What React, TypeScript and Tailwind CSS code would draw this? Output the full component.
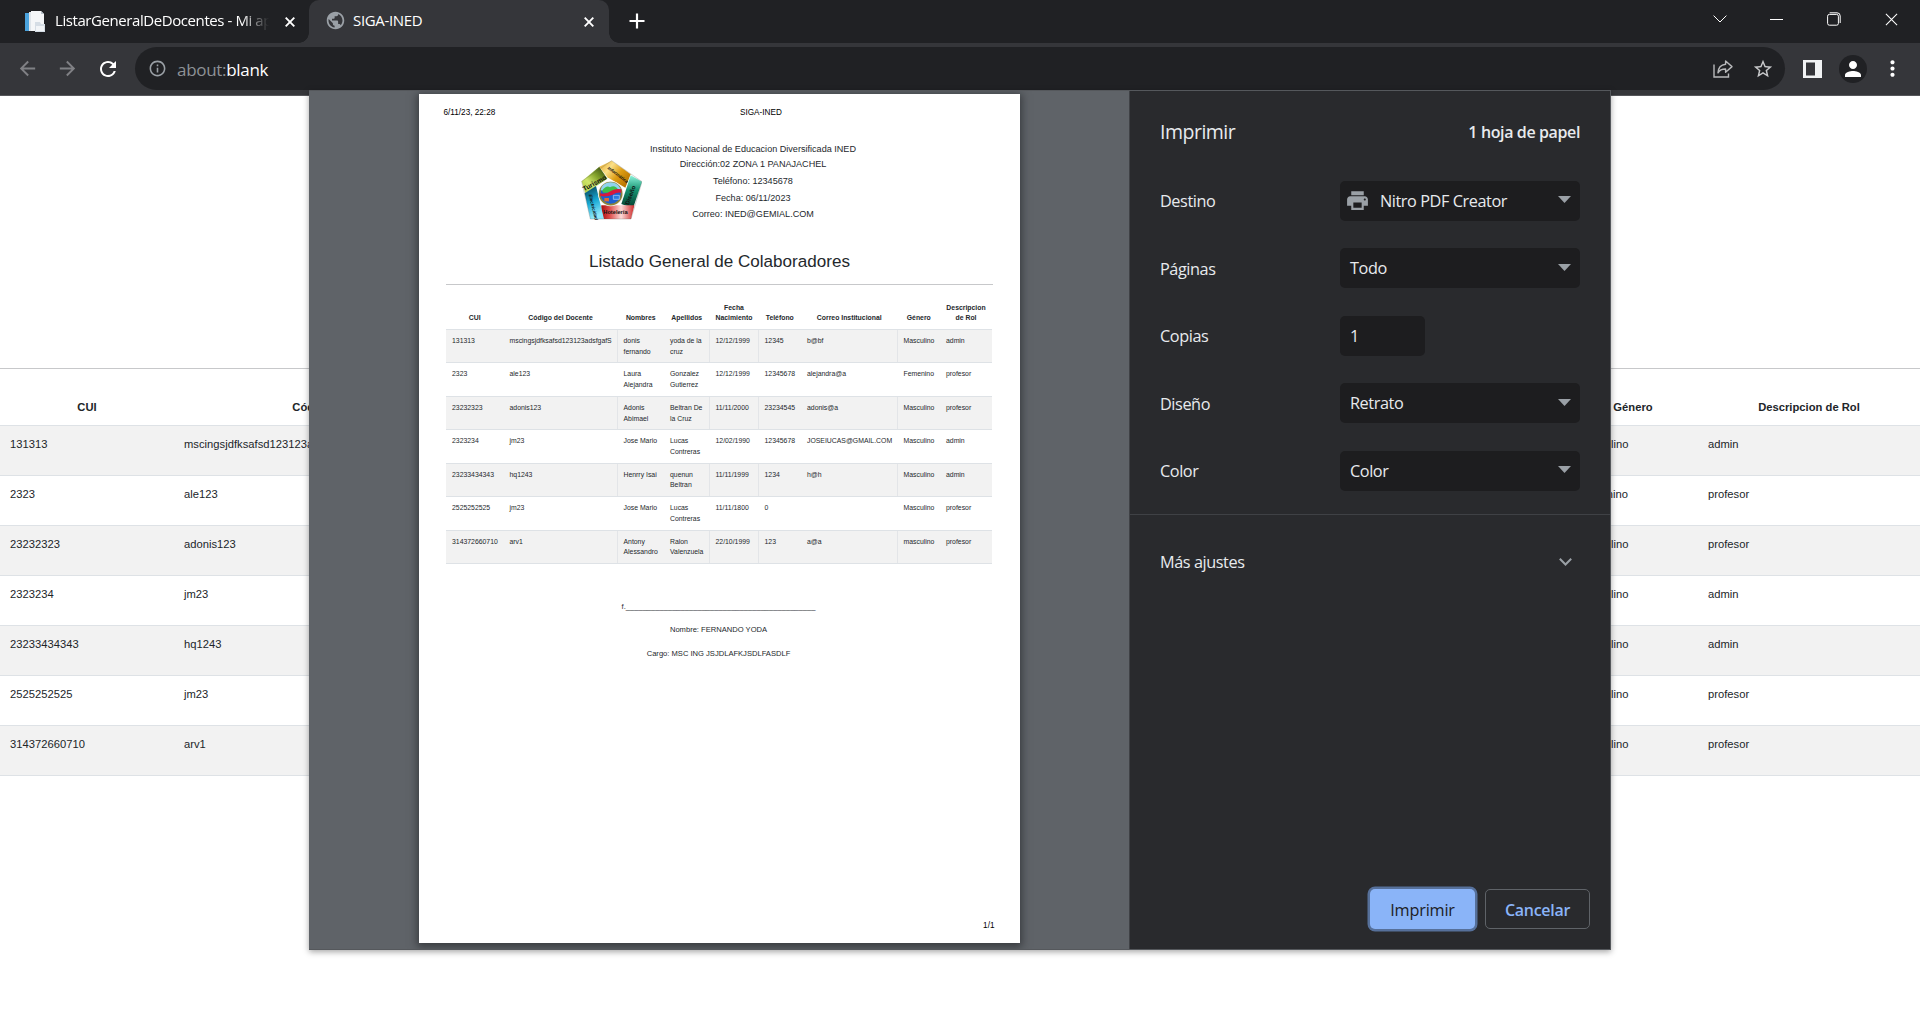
import React from "react";
import {
  MdArrowBack,
  MdArrowForward,
  MdInfoOutline,
  MdMoreVert,
  MdPerson,
  MdPrint,
  MdPublic,
  MdRefresh,
  MdStarBorder,
} from "react-icons/md";

type Row = string[];

const rows: Row[] = [
  ["131313", "mscingsjdfksafsd123123adsfgafS", "donis fernando", "yoda de la cruz", "12/12/1999", "12345", "b@bf", "Masculino", "admin"],
  ["2323", "ale123", "Laura Alejandra", "Gonzalez Gutierrez", "12/12/1999", "12345678", "alejandra@a", "Femenino", "profesor"],
  ["23232323", "adonis123", "Adonis Abimael", "Beltran De la Cruz", "11/11/2000", "23234545", "adonis@a", "Masculino", "profesor"],
  ["2323234", "jm23", "Jose Mario", "Lucas Contreras", "12/02/1990", "12345678", "JOSEIUCAS@GMAIL.COM", "Masculino", "admin"],
  ["23233434343", "hq1243", "Henrry Isai", "quenun Beltran", "11/11/1999", "1234", "h@h", "Masculino", "admin"],
  ["2525252525", "jm23", "Jose Mario", "Lucas Contreras", "11/11/1800", "0", "", "Masculino", "profesor"],
  ["314372660710", "arv1", "Antony Alessandro", "Ralon Valenzuela", "22/10/1999", "123", "a@a", "masculino", "profesor"],
];

const headers = ["CUI", "Código del Docente", "Nombres", "Apellidos", "Fecha Nacimiento", "Teléfono", "Correo Institucional", "Género", "Descripcion de Rol"];

const CloseX = ({ className }: { className: string }) => (
  <svg viewBox="0 0 10 10" className={className} fill="none" stroke="currentColor">
    <path d="M0.7 0.7 9.3 9.3M9.3 0.7 0.7 9.3" />
  </svg>
);

function TabStrip() {
  return (
    <div className="flex h-[43px] bg-[#202124] text-[15px] tracking-[-0.42px] text-white">
      <div className="flex w-[309px] items-center pl-6">
        <svg viewBox="0 0 22 21" className="h-[21px] w-[22px] shrink-0">
          <path d="M1 2h4v18H1z" fill="#4ba3dd" />
          <path d="M5 1h11v19H5z" fill="#dfe5ea" />
          <path d="M7 0h10l3 3v17H7z" fill="#f4f6f8" />
          <path d="M17 0v3h3z" fill="#b9c3cc" />
          <path d="M11 11h5l1 2h4v8H11z" fill="#d5dde5" />
          <path d="M12 15h8v5h-8z" fill="#f1f4f7" />
        </svg>
        <div className="ml-[9px] w-[214px] overflow-hidden pb-[2px] whitespace-nowrap [mask-image:linear-gradient(to_right,#000_87%,transparent)]">
          ListarGeneralDeDocentes - Mi ap
        </div>
        <CloseX className="ml-[16px] size-[10px] shrink-0 stroke-[1.9]" />
      </div>
      <div className="relative flex w-[300px] items-center rounded-t-[10px] bg-[#35363a] pl-4">
        <span className="absolute bottom-0 -left-[10px] size-[10px] bg-[radial-gradient(circle_at_0_0,transparent_9.5px,#35363a_10px)]" />
        <span className="absolute -right-[10px] bottom-0 size-[10px] bg-[radial-gradient(circle_at_100%_0,transparent_9.5px,#35363a_10px)]" />
        <MdPublic className="mb-[2px] size-[21px] text-[#9aa0a6]" />
        <span className="ml-[7px] pb-[2px] tracking-[-0.35px]">SIGA-INED</span>
        <CloseX className="mr-[15px] ml-auto size-[10px] stroke-[1.9]" />
      </div>
      <svg viewBox="0 0 16 16" className="mt-[13px] ml-[20px] size-4" stroke="#fff" strokeWidth="2.2">
        <path d="M8 0.5v15M0.5 8h15" />
      </svg>
      <div className="mt-[3px] ml-auto flex h-8 items-center">
        <svg viewBox="0 0 14 8" className="mr-[43px] h-2 w-[14px]" fill="none" stroke="#fff">
          <path d="M0.6 0.6 7 7 13.4 0.6" />
        </svg>
        <div className="mr-[44px] h-px w-[13px] bg-white" />
        <svg viewBox="0 0 14 14" className="mr-[44px] size-[14px]" fill="none" stroke="#fff">
          <rect x="0.6" y="2.4" width="10.8" height="10.8" rx="1.8" />
          <path d="M2.6 0.8h7.4a3.2 3.2 0 0 1 3.2 3.2v7" />
        </svg>
        <CloseX className="mr-[22px] size-[13px] stroke-[0.8]" />
      </div>
    </div>
  );
}

function Toolbar() {
  return (
    <div className="flex h-[53px] items-center border-b border-[#55565a] bg-[#35363a] pb-px">
      <MdArrowBack className="ml-[16px] size-[23px] text-[#808185]" />
      <MdArrowForward className="ml-[17px] size-[23px] text-[#808185]" />
      <MdRefresh className="ml-[17px] size-[24px] text-white" />
      <div className="ml-[15px] flex h-[43px] w-[1650px] items-center rounded-full bg-[#202124] pl-[13px]">
        <MdInfoOutline className="size-[19px] text-[#9aa0a6]" />
        <span className="ml-[10px] pt-[2px] text-[17px] tracking-[-0.3px] text-[#8d9196]">
          about:<span className="text-white">blank</span>
        </span>
        <svg viewBox="0 0 20 18" className="mr-[19px] ml-auto h-[18px] w-5" fill="none" stroke="#b8b9bb" strokeWidth="1.4">
          <path d="M1 4.5V17h14.5v-3.5" />
          <path d="M12.6 1 19 6.6l-6.4 5.6V9C9 9 6.5 10 5 12.8 5.2 8 8 4.7 12.6 4.2z" strokeLinejoin="round" />
        </svg>
        <MdStarBorder className="mr-[11px] size-[22px] text-[#c8c9cb]" />
      </div>
      <svg viewBox="0 0 19 18" className="ml-[18px] h-[18px] w-[19px]">
        <path fillRule="evenodd" d="M0 0h19v18H0zM3 2.500v13h9v-13z" fill="#f1f3f4" />
      </svg>
      <div className="ml-[17px] flex size-7 items-center justify-center rounded-full bg-[#202124]">
        <MdPerson className="size-[24px] text-white" />
      </div>
      <MdMoreVert className="ml-[13px] size-[25px] text-white" />
    </div>
  );
}

function BackgroundPage() {
  return (
    <div className="flex-1 overflow-hidden bg-white font-['Liberation_Sans',Arial,sans-serif] text-[11.2px] tracking-[0.02px] text-[#212529]">
      <div className="h-[273px] border-b border-[#c7c8ca]" />
      <div className="grid h-[57px] grid-cols-[174px_342px_1fr_130px_222px] items-end border-b border-[#dee2e6] pb-[9px] text-center font-bold">
        <span>CUI</span>
        <span>Código del Docente</span>
        <span />
        <span>Género</span>
        <span>Descripcion de Rol</span>
      </div>
      {rows.map((r, i) => (
        <div
          key={i}
          className="grid h-[50px] grid-cols-[174px_342px_1fr_130px_222px] border-b border-[#dee2e6] pt-[10px] odd:bg-[#f2f2f2] even:bg-white"
        >
          <span className="pl-[10px]">{r[0]}</span>
          <span className="pl-[10px]">{r[1]}</span>
          <span />
          <span className="pl-[10px]">{r[7]}</span>
          <span className="pl-[10px]">{r[8]}</span>
        </div>
      ))}
    </div>
  );
}

function SchoolLogo() {
  return (
    <svg viewBox="60 60 186 180" className="mt-[18.500px] h-[60px] w-[62px] shrink-0">
      <defs>
        <linearGradient id="green" x1="0" y1="1" x2="1" y2="0">
          <stop offset="0" stopColor="#a9c83c" />
          <stop offset="0.350" stopColor="#cfe56a" />
          <stop offset="0.600" stopColor="#86a52c" />
          <stop offset="1" stopColor="#213606" />
        </linearGradient>
        <linearGradient id="gold" x1="0" y1="0" x2="1" y2="0.700">
          <stop offset="0" stopColor="#e0a01a" />
          <stop offset="0.350" stopColor="#fbe089" />
          <stop offset="0.650" stopColor="#dd9d14" />
          <stop offset="1" stopColor="#b87400" />
        </linearGradient>
        <linearGradient id="teal" x1="0" y1="0" x2="0" y2="1">
          <stop offset="0" stopColor="#8df5dc" />
          <stop offset="0.450" stopColor="#15916f" />
          <stop offset="1" stopColor="#04392b" />
        </linearGradient>
        <linearGradient id="red" x1="0" y1="0" x2="1" y2="0">
          <stop offset="0" stopColor="#a80f0f" />
          <stop offset="0.250" stopColor="#dd4a48" />
          <stop offset="0.600" stopColor="#fbdad8" />
          <stop offset="1" stopColor="#cf2b2b" />
        </linearGradient>
        <linearGradient id="blue" x1="0" y1="0" x2="0.300" y2="1">
          <stop offset="0" stopColor="#05384a" />
          <stop offset="0.550" stopColor="#18a9d4" />
          <stop offset="1" stopColor="#8ee9fb" />
        </linearGradient>
      </defs>
      <path d="M62 122 155 62 246 125 213 237 91 237z" fill="#fff" />
      <path d="M65 124 118 80 142 116 76 160z" fill="url(#green)" />
      <path d="M118 80 155 62 212 103 196 143 142 112z" fill="url(#gold)" />
      <path d="M212 106 246 125 219 205 184 192z" fill="url(#teal)" />
      <path d="M124 196 223 196 213 237 124 237z" fill="url(#red)" />
      <path d="M74 160 108 138 132 237 91 237z" fill="url(#blue)" />
      <path d="M65 124 155 62 246 125 213 237 91 237z" fill="none" stroke="#55584f" strokeOpacity="0.4" strokeWidth="2" />
      <circle cx="152" cy="161" r="38" fill="#f4f4ee" />
      <circle cx="152" cy="161" r="33" fill="#1c60cf" stroke="#8b8338" strokeWidth="5" />
      <path d="M122 150q4-16 16-20 14-6 28 0 12 5 16 16l-8 8h-44z" fill="#8fd3ee" />
      <path d="M126 152q14-18 24-10 14-10 26 8l-8 8h-38z" fill="#3fbf4b" />
      <path d="M120 160q18 4 34-8 14-8 30-4v10q-14-2-26 6-18 8-38 4z" fill="#d8193c" />
      <path d="M133 174h14v10h-14z" fill="#e06a33" />
      <path d="M160 166h18v12h-18z" fill="#2b7de0" stroke="#bcd9f7" strokeWidth="2" />
      <g fill="#111" fontFamily="'Liberation Sans', Arial, sans-serif" fontWeight="700">
        <text x="73" y="154" fontSize="20" transform="rotate(-29 73 154)">Turismo</text>
        <text x="142" y="86" fontSize="13.500" fontStyle="italic" transform="rotate(37 142 86)">Informática</text>
        <text x="206" y="196" fontSize="18" transform="rotate(-69 206 196)">Diseño</text>
        <text x="130" y="221" fontSize="17">Hotelería</text>
        <text x="86" y="164" fontSize="14" fontStyle="italic" transform="rotate(76 86 164)">Electricidad</text>
      </g>
    </svg>
  );
}

const previewCols = "grid grid-cols-[57.500px_114px_46.500px_45.500px_49px_42.500px_96.500px_42.500px_52px]";

const dividedColumns = [1, 3, 4, 6];

function Preview() {
  return (
    <div className="w-[820px] overflow-hidden bg-[#5f6368] pt-[3px] pl-[110px]">
      <div className="flex h-[849px] w-[601px] flex-col bg-white font-['Liberation_Sans',Arial,sans-serif] text-[#24282c] shadow-[0_2px_8px_2px_rgba(32,33,36,0.600)]">
        <div className="mt-[11px] grid h-4 grid-cols-[296.500px_1fr] pl-[24.500px] text-[8.200px] leading-4 text-black">
          <span>6/11/23, 22:28</span>
          <span>SIGA-INED</span>
        </div>
        <div className="mt-[20px] flex h-[82px] pl-[161px]">
          <SchoolLogo />
          <div className="w-[222px] text-center text-[9.090px]">
            <div className="h-4 leading-4">Instituto Nacional de Educacion Diversificada INED</div>
            <div className="h-[14px] leading-[14px]">Dirección:02 ZONA 1 PANAJACHEL</div>
            <div className="h-5 leading-5">Teléfono: 12345678</div>
            <div className="h-[14px] leading-[14px]">Fecha: 06/11/2023</div>
            <div className="h-[18px] leading-[18px]">Correo: INED@GEMIAL.COM</div>
          </div>
        </div>
        <h1 className="mx-[27px] mt-[19px] h-[43px] border-b border-[#c7c8ca] text-center text-[17.070px] leading-[40px]">
          Listado General de Colaboradores
        </h1>
        <div className="ml-[27px] w-[546px] text-[6.870px] leading-[10.800px]">
          <div className={`${previewCols} h-[45px] items-end border-b border-[#dee2e6] pb-[6px] text-center leading-[10px] font-bold`}>
            {headers.map((h) => (
              <span key={h} className="px-[5px]">{h}</span>
            ))}
          </div>
          {rows.map((r, i) => (
            <div key={i} className={`${previewCols} h-[33.430px] border-b border-[#dee2e6] even:bg-[#f2f2f2]`}>
              {r.map((c, j) => (
                <span
                  key={j}
                  className={`pt-[6px] pl-[6px] ${i % 2 === 0 && dividedColumns.includes(j) ? "border-r border-[#e3e5e8]" : ""}`}
                >
                  {c}
                </span>
              ))}
            </div>
          ))}
        </div>
        <div className="mt-[35px] pr-[2px] text-center text-[7.580px] leading-[16px]">
          <div>f._____________________________________________</div>
          <div className="mt-[7px]">Nombre: FERNANDO YODA</div>
          <div className="mt-[8px]">Cargo: MSC ING JSJDLAFKJSDLFASDLF</div>
        </div>
        <div className="mt-auto mr-[25.500px] mb-[9px] text-right text-[8.200px] leading-4 text-black">1/1</div>
      </div>
    </div>
  );
}

const Setting = ({ label, children }: { label: string; children: React.ReactNode }) => (
  <div className="flex h-[67.500px] items-center">
    <span className="w-[180px] pt-px">{label}</span>
    {children}
  </div>
);

const Select = ({ children }: { children: React.ReactNode }) => (
  <div className="flex h-10 w-60 items-center rounded-[5px] bg-[#1d1d1f] pr-[9px]">
    {children}
    <svg viewBox="0 0 13 7" className="mb-[2px] ml-auto h-[7px] w-[13px]">
      <path d="M0 0h13L6.500 7z" fill="#9aa0a6" />
    </svg>
  </div>
);

function Settings() {
  return (
    <div className="flex flex-1 flex-col border-l border-[#3f4145] bg-[#292a2d] text-[16.250px] tracking-[-0.42px] text-[#e8eaed]">
      <div className="flex h-[76px] items-center justify-between px-[30px] pt-[6px]">
        <span className="text-[19.500px] tracking-[-0.5px]">Imprimir</span>
        <span className="text-[16px] font-semibold tracking-[-0.38px]">1 hoja de papel</span>
      </div>
      <div className="h-[348px] border-b border-[#3f4145] px-[30px]">
        <Setting label="Destino">
          <Select>
            <MdPrint className="ml-[5px] size-[25px] text-[#9aa0a6]" />
            <span className="ml-[10px]">Nitro PDF Creator</span>
          </Select>
        </Setting>
        <Setting label="Páginas">
          <Select><span className="ml-[10px]">Todo</span></Select>
        </Setting>
        <Setting label="Copias">
          <div className="flex h-10 w-[85px] items-center rounded-[5px] bg-[#1d1d1f] pl-[10px]">1</div>
        </Setting>
        <Setting label="Diseño">
          <Select><span className="ml-[10px]">Retrato</span></Select>
        </Setting>
        <Setting label="Color">
          <Select><span className="ml-[10px]">Color</span></Select>
        </Setting>
      </div>
      <div className="flex h-[93px] items-center justify-between px-[30px] pr-[38px]">
        <span className="pt-px">Más ajustes</span>
        <svg viewBox="0 0 13 8" className="h-2 w-[13px]" fill="none" stroke="#9aa0a6" strokeWidth="2">
          <path d="M0.8 0.8 6.5 6.5 12.2 0.8" />
        </svg>
      </div>
      <div className="mt-auto mr-5 mb-5 flex justify-end gap-[10px] font-medium">
        <button className="h-10 w-[105px] rounded-[5px] bg-[#8ab4f8] pt-[2px] tracking-[-0.2px] text-[#202124] shadow-[0_0_0_2.500px_#56709a]">Imprimir</button>
        <button className="h-10 w-[105px] rounded-[5px] border border-[#5f6368] pt-[2px] text-[16px] font-semibold tracking-[-0.3px] text-[#8ab4f8]">Cancelar</button>
      </div>
    </div>
  );
}

export default function App() {
  return (
    <div className="relative flex h-[1020px] w-[1920px] flex-col overflow-hidden font-['Open_Sans','Noto_Sans',sans-serif]">
      <TabStrip />
      <Toolbar />
      <BackgroundPage />
      <div className="absolute top-[90px] left-[309px] flex h-[860px] w-[1302px] border-t border-r border-b border-[#55585c] shadow-[0_2px_6px_rgba(0,0,0,0.350)]">
        <Preview />
        <Settings />
      </div>
    </div>
  );
}
